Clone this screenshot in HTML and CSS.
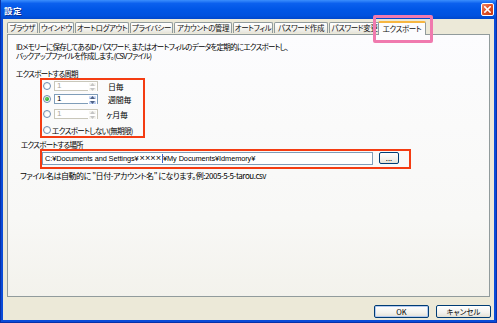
FILE: index.html
```html
<!DOCTYPE html>
<html lang="ja">
<head>
<meta charset="utf-8">
<title>設定</title>
<link rel="stylesheet" href="styles.css">
</head>
<body>
<div class="window">
  <div class="titlebar">
    <span class="title">設定</span>
    <span class="close"><svg width="7" height="7" viewBox="0 0 7 7"><path d="M0.8 0.8 L6.2 6.2 M6.2 0.8 L0.8 6.2" stroke="#fff" stroke-width="1.6" stroke-linecap="square"/></svg></span>
  </div>
  <div class="client">
    <div class="tabs">
      <div class="tab w1">ブラウザ</div>
      <div class="tab w2">ウインドウ</div>
      <div class="tab w3">オートログアウト</div>
      <div class="tab w4">プライバシー</div>
      <div class="tab w5">アカウントの管理</div>
      <div class="tab w6">オートフィル</div>
      <div class="tab w7">パスワード作成</div>
      <div class="tab w8">パスワード変更</div>
      <div class="tab active">エクスポート</div>
    </div>
    <div class="panel">
      <p class="desc"><span class="line">IDメモリーに保存してあるID・パスワード、またはオートフィルのデータを定期的にエクスポートし、</span><span class="line">バックアップファイルを作成します。(CSVファイル)</span></p>
      <div class="label">エクスポートする周期</div>
      <div class="period mark">
        <div class="row row1">
          <span class="radio"></span>
          <span class="spin off"><span class="val">1</span><span class="spin-btn"><span class="arr"><svg width="5" height="3" viewBox="0 0 5 3"><path d="M0 3 L2.5 0 L5 3Z" fill="#C4C4C4"/></svg></span><span class="arr"><svg width="5" height="3" viewBox="0 0 5 3"><path d="M0 0 L2.5 3 L5 0Z" fill="#C4C4C4"/></svg></span></span></span>
          <span class="unit">日毎</span>
        </div>
        <div class="row row2">
          <span class="radio on"><span class="dot"></span></span>
          <span class="spin"><span class="val">1</span><span class="spin-btn"><span class="arr"><svg width="5" height="3" viewBox="0 0 5 3"><path d="M0 3 L2.5 0 L5 3Z" fill="#4D6185"/></svg></span><span class="arr"><svg width="5" height="3" viewBox="0 0 5 3"><path d="M0 0 L2.5 3 L5 0Z" fill="#4D6185"/></svg></span></span></span>
          <span class="unit">週間毎</span>
        </div>
        <div class="row row3">
          <span class="radio"></span>
          <span class="spin off"><span class="val">1</span><span class="spin-btn"><span class="arr"><svg width="5" height="3" viewBox="0 0 5 3"><path d="M0 3 L2.5 0 L5 3Z" fill="#C4C4C4"/></svg></span><span class="arr"><svg width="5" height="3" viewBox="0 0 5 3"><path d="M0 0 L2.5 3 L5 0Z" fill="#C4C4C4"/></svg></span></span></span>
          <span class="unit u3">ヶ月毎</span>
        </div>
        <div class="row row4">
          <span class="radio"></span>
          <span class="none">エクスポートしない(無期限)</span>
        </div>
      </div>
      <div class="label place">エクスポートする場所</div>
      <div class="path mark">
        <div class="path-input">C:¥Documents and Settings¥<span class="mask">××××</span><span class="caret"></span>¥My Documents¥Idmemory¥</div>
        <button class="btn browse">...</button>
      </div>
      <div class="note">ファイル名は自動的に "日付-アカウント名" になります。例:2005-5-5-tarou.csv</div>
    </div>
    <div class="actions">
      <button class="btn big default">OK</button>
      <button class="btn big">キャンセル</button>
    </div>
  </div>
  <div class="highlight"></div>
</div>
</body>
</html>
```
FILE: styles.css
```css
* { box-sizing: border-box; }
html, body { margin: 0; padding: 0; }
body {
  width: 497px;
  height: 323px;
  overflow: hidden;
  font-family: "Noto Sans CJK JP", "Liberation Sans", sans-serif;
  font-feature-settings: "palt";
  font-size: 7.5px;
  color: #000;
}
.window {
  position: relative;
  width: 497px;
  height: 323px;
  background: #0A4BD8;
  border: 1px solid #0831A8;
  border-top: none;
  display: flex;
  flex-direction: column;
}
.titlebar {
  height: 19px;
  flex: none;
  display: flex;
  align-items: center;
  justify-content: space-between;
  padding: 0 2px 0 3px;
  background: linear-gradient(#3B8EFD 0%, #0B60EE 18%, #0056E6 50%, #0052DF 82%, #0047CC 100%);
}
.title {
  color: #fff;
  font-size: 8.5px;
  font-weight: bold;
  letter-spacing: 0.5px;
  text-shadow: 1px 1px 0 #0A2D8A;
  line-height: 10px;
}
.close {
  width: 13px;
  height: 13px;
  border: 1px solid #fff;
  border-radius: 2px;
  background: linear-gradient(135deg, #F08A68 0%, #E2532C 45%, #C53A14 100%);
  display: flex;
  align-items: center;
  justify-content: center;
}
.close svg { display: block; }
.client {
  flex: 1;
  margin: 0 2px 2px;
  background: #ECE9D8;
  padding: 3px 4px 0 4px;
  display: flex;
  flex-direction: column;
}
.tabs {
  height: 12px;
  display: flex;
  align-items: flex-end;
  position: relative;
  z-index: 2;
}
.tab {
  height: 11px;
  margin-right: 1px;
  margin-bottom: 1px;
  border: 1px solid #919B9C;
  border-bottom: none;
  border-radius: 2px 2px 0 0;
  background: linear-gradient(#FFFFFF, #F3F3EF 60%, #E6E4DA);
  font-size: 7.5px;
  letter-spacing: -0.4px;
  line-height: 9px;
  text-align: center;
  white-space: nowrap;
  overflow: hidden;
  color: #111;
}
.w1 { width: 31px; }
.w2 { width: 35px; }
.w3 { width: 54px; }
.w4 { width: 43px; }
.w5 { width: 58px; }
.w6 { width: 40px; }
.w7 { width: 54px; }
.w8 { width: 51px; margin-right: 0; }
.tab.active {
  height: 14px;
  width: 48px;
  margin-left: -2px;
  margin-bottom: -1px;
  border-top: 2px solid #F7B640;
  background: #FCFCFE;
  line-height: 11px;
  position: relative;
}
.panel {
  height: 263px;
  border: 1px solid #919B9C;
  background: linear-gradient(#FCFCFE, #F8F8F6 70%, #F3F2EC);
  padding: 6.5px 8px 0 8px;
  position: relative;
  z-index: 1;
}
.desc {
  margin: 0;
  display: flex;
  flex-direction: column;
  letter-spacing: -0.75px;
  white-space: nowrap;
}
.desc .line {
  display: block;
  height: 9px;
  line-height: 9px;
}
.label {
  margin-top: 9.5px;
  line-height: 9px;
  letter-spacing: -0.75px;
}
.label.place {
  margin-top: 3px;
  margin-left: 5px;
  line-height: 8px;
}
.mark {
  border: 2px solid #F43C12;
}
.period {
  margin-left: 24px;
  width: 105px;
  height: 60px;
  padding: 0 0 0 1px;
}
.row {
  height: 10px;
  display: flex;
  align-items: center;
}
.row1 { margin-top: 1px; }
.row2 { margin-top: 3px; }
.row3 { margin-top: 5px; }
.row4 { margin-top: 6px; }
.radio {
  width: 8px;
  height: 8px;
  flex: none;
  border: 1px solid #6F8DB2;
  border-radius: 50%;
  background: radial-gradient(circle at 60% 60%, #FFFFFF 30%, #E6E6DE 100%);
  display: flex;
  align-items: center;
  justify-content: center;
}
.radio .dot {
  width: 4px;
  height: 4px;
  border-radius: 50%;
  background: radial-gradient(circle at 40% 40%, #6BD36B, #21A121 70%);
}
.spin {
  margin-left: 3px;
  width: 44px;
  height: 10px;
  border: 1px solid #7F9DB9;
  background: #fff;
  display: flex;
  justify-content: space-between;
  font-family: "Liberation Sans", sans-serif;
  font-size: 8px;
  line-height: 8px;
}
.spin .val { padding-left: 2px; }
.spin.off { border-color: #C9C7BA; color: #ACA899; }
.spin-btn {
  width: 9px;
  display: flex;
  flex-direction: column;
}
.arr {
  flex: 1;
  display: flex;
  align-items: center;
  justify-content: center;
  background: linear-gradient(#D5E1F8, #B4C8EE);
  border: 1px solid #fff;
  border-radius: 1px;
}
.spin.off .arr { background: #F4F3EE; }
.arr svg { display: block; }
.unit {
  margin-left: 10px;
  line-height: 9px;
  font-size: 8px;
  letter-spacing: -0.3px;
}
.u3 { margin-left: 8px; }
.none {
  margin-left: 1px;
  letter-spacing: -0.6px;
  line-height: 9px;
  white-space: nowrap;
}
.path {
  margin-left: 24px;
  width: 371px;
  height: 20px;
  display: flex;
  align-items: flex-start;
  padding-top: 1px;
}
.path-input {
  width: 331px;
  height: 13px;
  border: 1px solid #7F9DB9;
  background: #fff;
  padding-left: 2px;
  font-family: "Liberation Sans", sans-serif;
  font-size: 7.4px;
  line-height: 11px;
  white-space: nowrap;
  overflow: hidden;
  letter-spacing: -0.1px;
  display: flex;
  align-items: center;
}
.mask { font-size: 9.2px; letter-spacing: 0; margin-left: 1px; }
.caret {
  display: inline-block;
  width: 1px;
  height: 9px;
  background: #3A62C8;
  margin: 0 0.5px;
}
.btn {
  font-family: "Noto Sans CJK JP", "Liberation Sans", sans-serif;
  font-feature-settings: "palt";
  font-size: 7.5px;
  color: #000;
  border: 1px solid #003C74;
  border-radius: 2px;
  background: linear-gradient(#FFFFFF, #F3F2EE 60%, #E3E0D5);
  padding: 0;
  margin: 0;
}
.browse {
  margin-left: 6px;
  width: 20px;
  height: 12px;
  line-height: 8px;
}
.note {
  margin-top: 2px;
  margin-left: 4px;
  line-height: 9px;
  font-size: 8px;
  letter-spacing: -0.45px;
  white-space: nowrap;
}
.actions {
  margin-top: 8px;
  margin-right: -1px;
  display: flex;
  justify-content: flex-end;
  gap: 7px;
}
.btn.big {
  width: 55px;
  height: 13px;
  line-height: 10px;
}
.btn.default {
  box-shadow: inset 0 0 0 1px #B3C9F0;
}
.highlight {
  position: absolute;
  left: 372px;
  top: 15px;
  width: 60px;
  height: 28px;
  border: 3px solid #F07AAE;
  border-radius: 2px;
  z-index: 5;
  pointer-events: none;
}
```
